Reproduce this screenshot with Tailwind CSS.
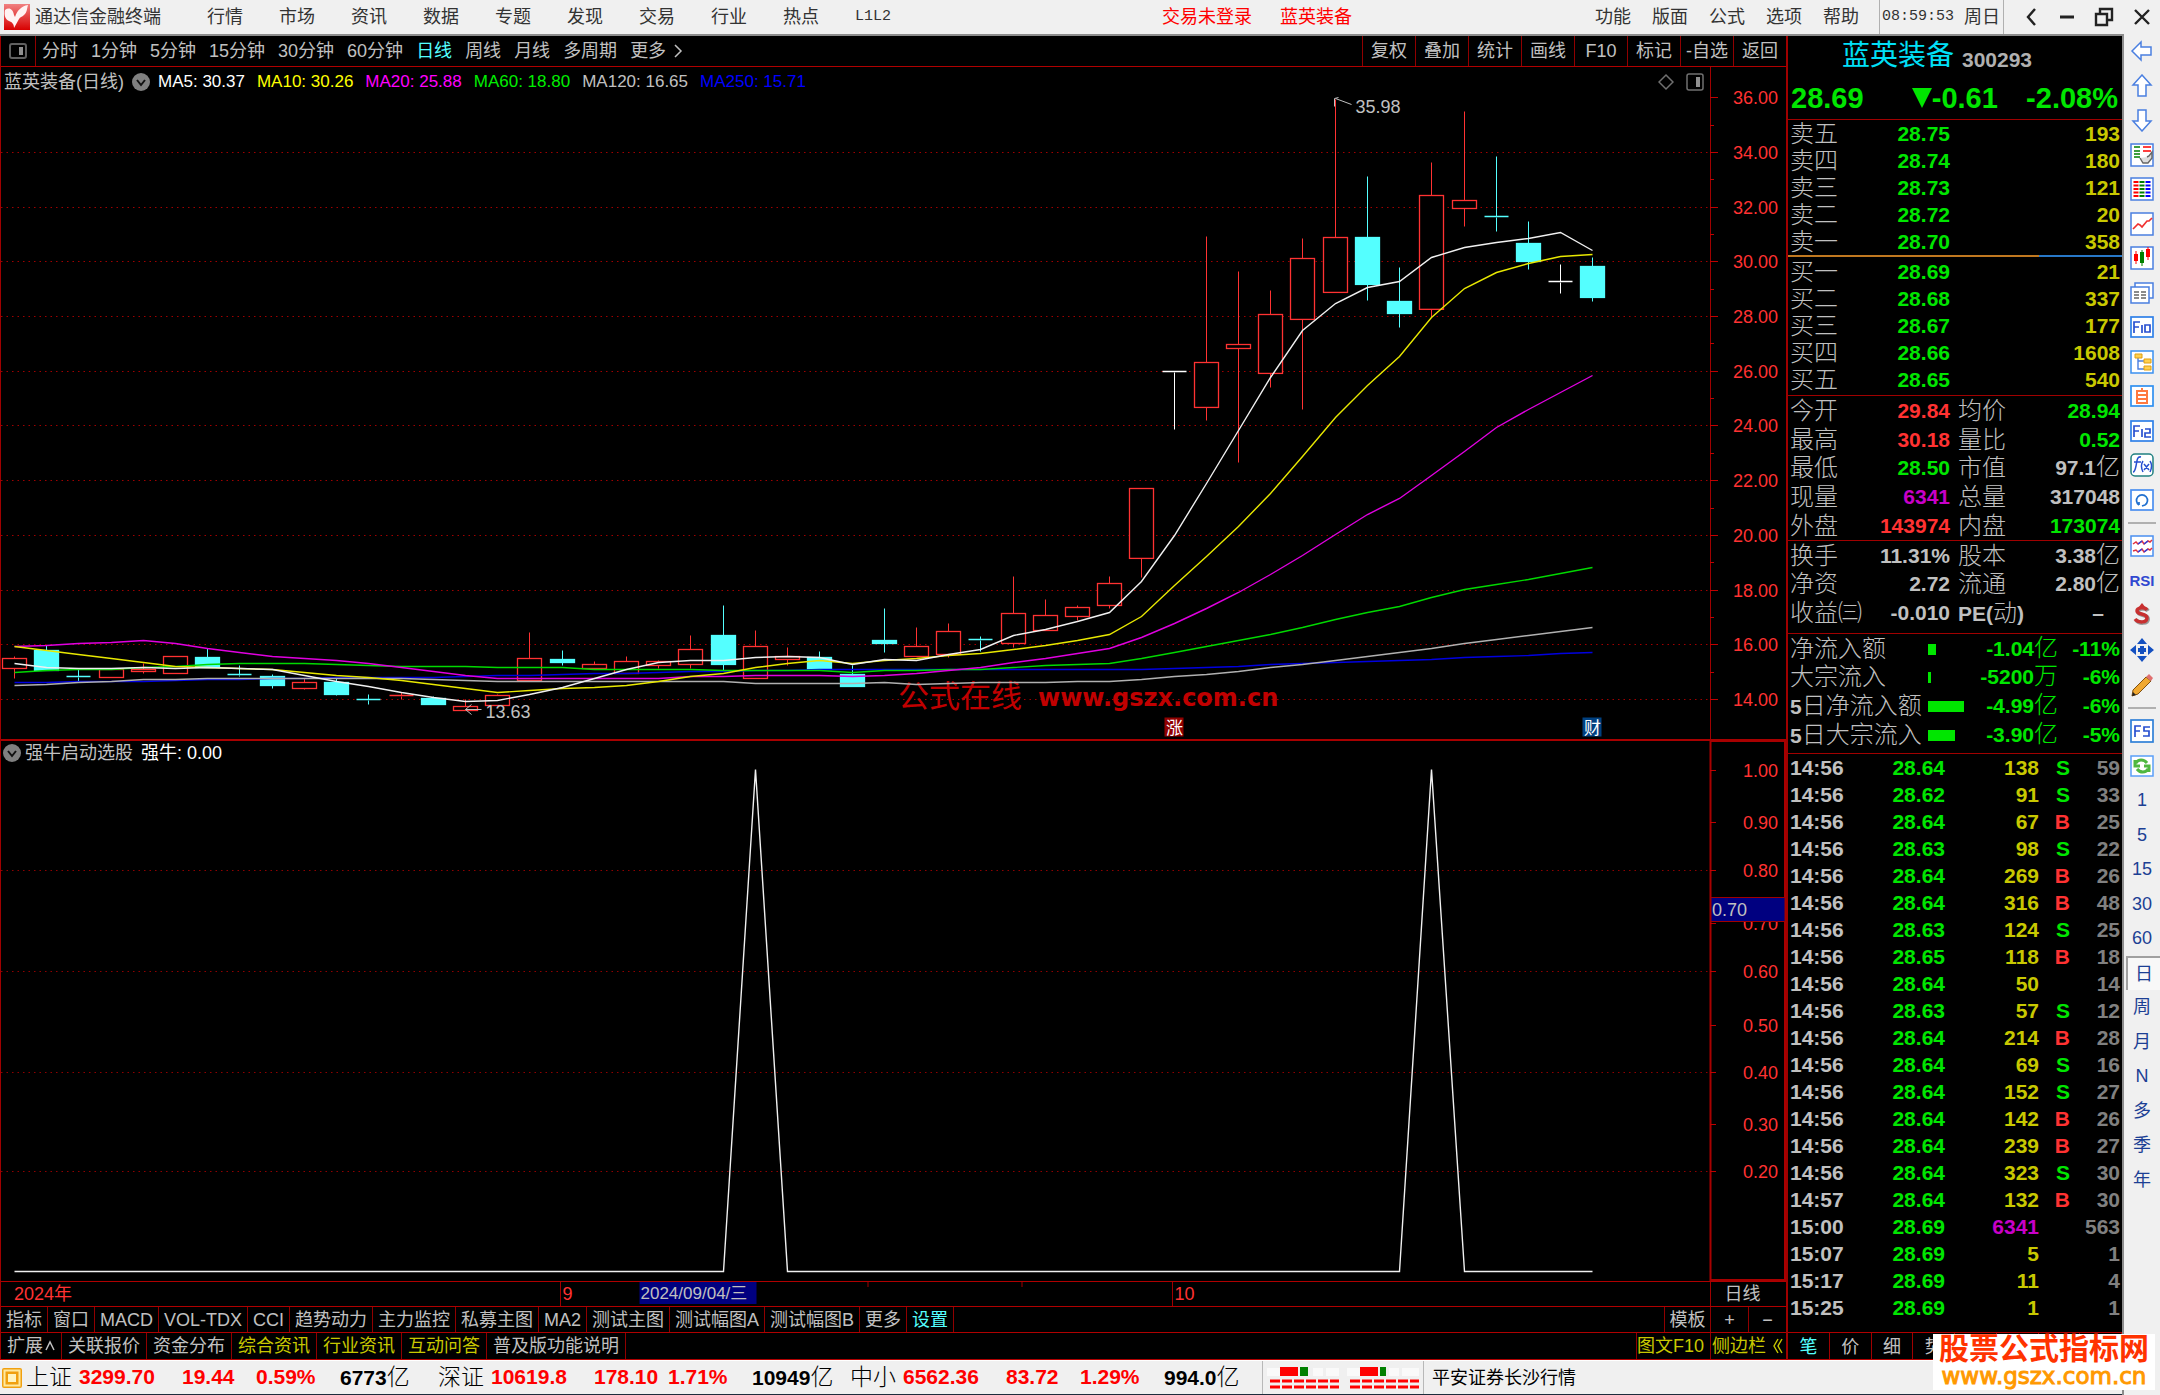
<!DOCTYPE html>
<html lang="zh-CN">
<head>
<meta charset="utf-8">
<title>通达信金融终端</title>
<script src="https://cdn.jsdelivr.net/npm/@tailwindcss/browser@4"></script>
</head>
<body class="flex h-screen flex-col overflow-hidden bg-[#f0f0f0] font-['Liberation_Sans','Noto_Sans_CJK_SC',sans-serif] text-lg leading-6 text-[#c0c0c0]">

<header class="flex h-[34px] shrink-0 items-center whitespace-nowrap text-[#333]">
  <svg class="ml-1 size-[26px] shrink-0" viewBox="0 0 26 26"><defs><linearGradient id="lg" x1="0" y1="0" x2="0" y2="1"><stop offset="0" stop-color="#f08080"/><stop offset="1" stop-color="#d80000"/></linearGradient></defs><rect width="26" height="26" fill="url(#lg)"/><path d="M1 6C5 3 9 5 10 11l1 2C13 7 17 2 24 1c-1 3-1 8-4 10-2 2-4 2-5 4l-5 9C10 20 8 18 5 17 1 15 0 11 1 6z" fill="#fff3f3"/></svg>
  <h1 class="ml-[5px] w-[172px]">通达信金融终端</h1>
  <nav class="flex gap-9">
    <a href="#">行情</a><a href="#">市场</a><a href="#">资讯</a><a href="#">数据</a><a href="#">专题</a><a href="#">发现</a><a href="#">交易</a><a href="#">行业</a><a href="#">热点</a><a href="#" class="font-['Liberation_Mono',monospace] text-[15px]">L1L2</a>
  </nav>
  <div class="ml-auto flex gap-7 pr-[243px] text-[#f00]"><a href="#">交易未登录</a><a href="#">蓝英装备</a></div>
  <nav class="flex gap-[21px] pr-5"><a href="#">功能</a><a href="#">版面</a><a href="#">公式</a><a href="#">选项</a><a href="#">帮助</a></nav>
  <div class="flex h-full w-[125px] items-center justify-between border-x border-[#b0b0b0] pl-[2px] pr-[3px]"><time class="font-['Liberation_Mono',monospace] text-[15px]">08:59:53</time><span>周日</span></div>
  <div class="flex w-[156px] items-center justify-between pl-[19px] pr-[10px] text-[#222]">
    <button aria-label="后退"><svg class="h-5 w-4" viewBox="0 0 16 20" fill="none" stroke="currentColor" stroke-width="2.4"><path d="M12 2L5 10l7 8"/></svg></button>
    <button aria-label="最小化"><svg class="h-5 w-4" viewBox="0 0 16 20"><path d="M1 10h14" stroke="currentColor" stroke-width="3"/></svg></button>
    <button aria-label="还原"><svg class="size-5" viewBox="0 0 20 20" fill="none" stroke="currentColor" stroke-width="2.4"><path d="M2 7h11v11H2zM6 7V2h12v11h-5"/></svg></button>
    <button aria-label="关闭"><svg class="h-5 w-4" viewBox="0 0 16 20" fill="none" stroke="currentColor" stroke-width="2.4"><path d="M1 3l14 14M15 3L1 17"/></svg></button>
  </div>
</header>

<div class="flex min-h-0 flex-1">
<div class="flex min-w-0 flex-1 flex-col border-r-2 border-t-2 border-[#8c8c8c]">
<div class="flex min-h-0 flex-1 bg-black">

<main class="flex min-w-0 flex-1 flex-col border-l border-[#a00000]">
  <div class="flex h-[31px] shrink-0 items-center border-b border-[#b00000] whitespace-nowrap">
    <button aria-label="侧栏" class="flex h-full w-[35px] items-center justify-center border-r border-[#900000]"><svg class="size-[18px]" viewBox="0 0 18 18" fill="none" stroke="#606060" stroke-width="2"><rect x="1" y="2" width="16" height="14" rx="2"/><path d="M12 5v8" stroke="#909090" stroke-width="4"/></svg></button>
    <nav class="flex gap-[13px] pl-[6px]">
      <button>分时</button><button>1分钟</button><button>5分钟</button><button>15分钟</button><button>30分钟</button><button>60分钟</button><button class="text-[#54ffff]">日线</button><button>周线</button><button>月线</button><button>多周期</button><button class="flex items-center gap-1">更多<svg class="size-4" viewBox="0 0 16 16" fill="none" stroke="currentColor" stroke-width="1.5"><path d="M5 2l6 6-6 6"/></svg></button>
    </nav>
    <nav class="ml-auto flex h-full [&>button]:w-[53px] [&>button]:border-l [&>button]:border-[#900000]">
      <button>复权</button><button>叠加</button><button>统计</button><button>画线</button><button>F10</button><button>标记</button><button>-自选</button><button>返回</button>
    </nav>
  </div>

  <section class="relative min-h-0 flex-[673]">
    <svg id="price" class="absolute inset-0 size-full"></svg>
    <div class="relative flex items-center gap-3 pl-[3px] pr-[82px] pt-[3px] text-[17px] whitespace-nowrap">
      <span class="-mr-1 text-lg leading-6">蓝英装备(日线)</span>
      <svg class="-mr-1 size-[18px]" viewBox="0 0 18 18"><circle cx="9" cy="9" r="9" fill="#808080"/><path d="M5 7l4 5 4-5" fill="none" stroke="#111" stroke-width="2"/></svg>
      <span class="text-white">MA5: 30.37</span><span class="text-[#ff0]">MA10: 30.26</span><span class="text-[#f0f]">MA20: 25.88</span><span class="text-[#0e0]">MA60: 18.80</span><span>MA120: 16.65</span><span class="text-[#00f]">MA250: 15.71</span>
      <svg class="ml-auto h-[18px] w-4" viewBox="0 0 16 18" fill="none" stroke="#707070" stroke-width="1.5"><path d="M8 2l7 7-7 7-7-7z"/></svg>
      <svg class="size-[18px]" viewBox="0 0 18 18" fill="none" stroke="#707070" stroke-width="1.5"><rect x="1" y="1" width="16" height="16" rx="2"/><path d="M12 4v10" stroke="#909090" stroke-width="4"/></svg>
    </div>
  </section>

  <section class="relative min-h-0 flex-[541] border-t-2 border-[#a80000]">
    <svg id="signal" class="absolute inset-0 size-full"></svg>
    <div class="relative flex items-center gap-2 pl-[2px] text-lg leading-6">
      <svg class="-mr-1 size-[18px]" viewBox="0 0 18 18"><circle cx="9" cy="9" r="9" fill="#808080"/><path d="M5 7l4 5 4-5" fill="none" stroke="#111" stroke-width="2"/></svg>
      <span>强牛启动选股</span><span class="text-white">强牛: 0.00</span>
    </div>
  </section>

  <div class="flex h-[25px] shrink-0 border-t border-[#b00000]">
    <svg id="dates" class="h-full min-w-0 flex-1"></svg>
    <div class="w-[76px] border-l border-[#a00000] pr-3 text-center">日线</div>
  </div>

  <div class="flex h-[26px] shrink-0 border-t border-[#b00000] whitespace-nowrap">
    <nav class="flex [&>button]:border-r [&>button]:border-[#900000] [&>button]:px-[5px]">
      <button>指标</button><button>窗口</button><button>MACD</button><button>VOL-TDX</button><button>CCI</button><button>趋势动力</button><button>主力监控</button><button>私募主图</button><button>MA2</button><button>测试主图</button><button>测试幅图A</button><button>测试幅图B</button><button>更多</button><button class="text-[#54ffff]">设置</button>
    </nav>
    <div class="ml-auto flex [&>button]:border-l [&>button]:border-[#900000]"><button class="w-[46px]">模板</button><button class="w-[38px]">+</button><button class="w-[38px]">−</button></div>
  </div>
  <div class="flex h-[28px] shrink-0 border-y border-[#b00000] leading-[26px] whitespace-nowrap">
    <nav class="flex [&>a]:border-r [&>a]:border-[#900000] [&>a]:px-[6px]">
      <a href="#" class="flex items-center gap-[2px]">扩展<svg class="h-4 w-[10px]" viewBox="0 0 10 16" fill="none" stroke="currentColor" stroke-width="1.5"><path d="M1 12l4-8 4 8"/></svg></a><a href="#">关联报价</a><a href="#">资金分布</a><a href="#" class="text-[#c8c800]">综合资讯</a><a href="#" class="text-[#c8c800]">行业资讯</a><a href="#" class="text-[#c8c800]">互动问答</a><a href="#">普及版功能说明</a>
    </nav>
    <div class="ml-auto flex text-[#c8c800] [&>a]:border-l [&>a]:border-[#900000]"><a href="#" class="w-[74px]">图文F10</a><a href="#" class="flex w-[76px] items-center gap-[6px] pl-px">侧边栏<svg class="h-4 w-3" viewBox="0 0 12 16" fill="none" stroke="currentColor" stroke-width="1.4"><path d="M6 1L2 8l4 7M10 1L6 8l4 7"/></svg></a></div>
  </div>
</main>

<aside class="flex w-[336px] shrink-0 flex-col border-l-2 border-[#a00000] text-[21px] font-bold [&_th]:text-left [&_th]:text-[24px] [&_th]:font-light [&_td]:text-right">
  <div class="h-[84px] shrink-0 border-b border-[#a00000] px-[3px]">
    <h2 class="flex h-10 items-center justify-center gap-2 pr-9 font-normal leading-9"><span class="text-[28px] leading-9 text-[#00e0f8]">蓝英装备</span><span class="pt-2 text-[21px] leading-7 font-bold text-[#b0b0b0]">300293</span></h2>
    <div class="flex h-11 items-center justify-between pr-px text-[29px] text-[#00e600]"><span>28.69</span><span class="flex items-center pl-5"><svg class="size-5" viewBox="0 0 20 20"><path d="M0 0h20L10 20z" fill="currentColor"/></svg>-0.61</span><span>-2.08%</span></div>
  </div>
  <table class="mx-[2px] table-fixed leading-[27px]"><colgroup><col class="w-[60px]"><col class="w-[100px]"><col></colgroup><tbody id="asks"></tbody></table>
  <div class="mb-px flex h-[2px] shrink-0"><i class="flex-[3] bg-[#c07820]"></i><i class="flex-1 bg-[#2878c8]"></i></div>
  <table class="mx-[2px] table-fixed leading-[27px]"><colgroup><col class="w-[60px]"><col class="w-[100px]"><col></colgroup><tbody id="bids"></tbody></table>
  <div class="mt-[2px] border-t border-[#a00000] px-[2px] pt-px">
    <table class="h-[143px] w-full table-fixed leading-[28px]"><colgroup><col class="w-[76px]"><col class="w-[84px]"><col class="w-[90px]"><col></colgroup><tbody id="quote"></tbody></table>
  </div>
  <div class="border-t border-[#a00000] px-[2px] pb-[5px] pt-px">
    <table class="h-[86px] w-full table-fixed leading-[28px]"><colgroup><col class="w-[76px]"><col class="w-[84px]"><col class="w-[90px]"><col></colgroup><tbody id="shares"></tbody></table>
  </div>
  <div class="border-y border-[#a00000] px-[2px] pb-[3px] pt-px">
    <table class="h-[115px] w-full table-fixed leading-[28px] text-[#00e600]"><colgroup><col class="w-[138px]"><col class="w-[36px]"><col class="w-[94px]"><col></colgroup><tbody id="flow"></tbody></table>
  </div>
  <table class="mx-[2px] table-fixed leading-[27px]"><colgroup><col class="w-[60px]"><col class="w-[95px]"><col class="w-[94px]"><col class="w-[31px]"><col></colgroup><tbody id="ticks"></tbody></table>
  <nav class="mt-auto flex h-[28px] shrink-0 border-y border-[#b00000] text-lg font-normal [&>*]:flex-1 [&>*]:border-r [&>*]:border-[#a00000]">
    <button class="text-[#54ffff]">笔</button><button>价</button><button>细</button><button>势</button><i></i><i></i><i></i><i></i>
  </nav>
</aside>
</div>

<footer class="flex h-[35px] shrink-0 items-center border-b border-t border-b-[#1c2c3c] border-t-white bg-[#f0f0f0] text-[21px] font-bold whitespace-nowrap text-black">
  <svg class="ml-[2px] mr-1 size-5 shrink-0" viewBox="0 0 20 20"><rect width="20" height="20" rx="2" fill="#f0a010"/><rect x="2.500" y="2.500" width="15" height="15" fill="none" stroke="#ffe9a0" stroke-width="2"/><rect x="6" y="6" width="8" height="8" fill="#fff4c0"/></svg>
  <div id="indices" class="flex"></div>
  <div class="flex h-full w-[162px] items-center justify-center gap-2 border-x border-[#b8b8b8]">
    <svg class="h-[22px] w-[72px]" viewBox="0 0 72 22"><path d="M0 1h15v8H0zM46 1h10v8H46zM59 1h13v8H59z" fill="#fafafa"/><path d="M13 0h18v9H13z" fill="red"/><path d="M33 0h8v9h-8z" fill="green"/><path d="M3 14h69M3 20h69" stroke="red" stroke-width="3" stroke-dasharray="10 2"/></svg>
    <svg class="h-[22px] w-[72px]" viewBox="0 0 72 22"><path d="M0 1h15v8H0zM42 1h10v8H42zM55 1h17v8H55z" fill="#fafafa"/><path d="M13 0h18v9H13z" fill="red"/><path d="M33 0h6v9h-6z" fill="green"/><path d="M3 14h69M3 20h69" stroke="red" stroke-width="3" stroke-dasharray="10 2"/></svg>
  </div>
  <span class="pl-2 text-lg font-normal">平安证券长沙行情</span>
</footer>
</div>

<nav class="flex w-9 shrink-0 flex-col text-[#1c3f94] [&_button]:flex [&_button]:items-center [&_button]:justify-center [&_svg]:size-6">
  <div class="grid h-[483px] shrink-0 auto-rows-fr">
    <button aria-label="左"><svg viewBox="0 0 24 24" fill="#fff" stroke="#4a7fe0" stroke-width="1.500"><path d="M2 12l9-9v5h10v8H11v5z"/></svg></button>
    <button aria-label="上"><svg viewBox="0 0 24 24" fill="#fff" stroke="#4a7fe0" stroke-width="1.500"><path d="M12 1l9 10h-5v11H8V11H3z"/></svg></button>
    <button aria-label="下"><svg viewBox="0 0 24 24" fill="#fff" stroke="#4a7fe0" stroke-width="1.500"><path d="M12 23l9-10h-5V2H8v11H3z"/></svg></button>
    <button aria-label="委托"><svg viewBox="0 0 24 24"><rect x="1" y="1" width="22" height="22" fill="#fff" stroke="#4a7fe0" stroke-width="1.500"/><path d="M4 4h6M4 8h6M4 11h6M4 14h6" stroke="green" stroke-width="1.600"/><path d="M13 4h8M13 8h8" stroke="red" stroke-width="1.600"/><path d="M10 15l3 5h5l4-5V9l-3 4-2 1" fill="#ddd" stroke="#666" stroke-width="1.400"/></svg></button>
    <button aria-label="列表"><svg viewBox="0 0 24 24"><rect x="1" y="1" width="22" height="22" fill="#fff" stroke="#4a7fe0" stroke-width="1.500"/><g stroke-width="5" stroke-dasharray="2 1.500"><path d="M6 4v16" stroke="red"/><path d="M12 4v16" stroke="green"/><path d="M18 4v16" stroke="blue"/></g></svg></button>
    <button aria-label="分时图"><svg viewBox="0 0 24 24" fill="none"><rect x="1" y="1" width="22" height="22" fill="#fff" stroke="#4a7fe0" stroke-width="1.500"/><path d="M3 17l5-5 2 1 2 2 5-6 2 0 3-3" stroke="#f03030" stroke-width="1.700"/></svg></button>
    <button aria-label="K线图"><svg viewBox="0 0 24 24"><rect x="1" y="1" width="22" height="22" fill="#fff" stroke="#4a7fe0" stroke-width="1.500"/><path d="M6 5v13M18 1v13" stroke="red"/><path d="M12 4v16" stroke="green"/><path d="M4 8h4v7H4zM16 3h4v8h-4z" fill="red"/><path d="M10 6h4v11h-4z" fill="green"/></svg></button>
    <button aria-label="多窗口"><svg viewBox="0 0 24 24" fill="#fff" stroke="#4a7fe0" stroke-width="1.500"><path d="M5 2h18v15H5z"/><path d="M1 6h18v16H1z"/><path d="M4 11h5M11 11h5M4 14h5M11 14h5M4 17h5M11 17h5" stroke="#666"/></svg></button>
    <button aria-label="F10"><svg viewBox="0 0 24 24" fill="none" stroke="#2850d0" stroke-width="1.700"><rect x="1" y="2" width="22" height="20" fill="#fff" stroke="#2f80e8"/><path d="M4 18V7h6M4 12h5M12 10v8M15 10h5v7h-5z"/></svg></button>
    <button aria-label="树形"><svg viewBox="0 0 24 24" fill="none"><rect x="1" y="1" width="22" height="22" fill="#fff" stroke="#3a90f0" stroke-width="1.500"/><path d="M8 7v12h6M8 11h6" stroke="#4a7fe0" stroke-width="1.400"/><path d="M5 4h7v4H5zM14 9h7v4h-7zM14 16h7v4h-7z" fill="#ffd050" stroke="#e0a010"/></svg></button>
    <button aria-label="自选"><svg viewBox="0 0 24 24" fill="none" stroke="#ff7a40" stroke-width="2"><rect x="1" y="2" width="22" height="20" fill="#fff" stroke="#2f90f0" stroke-width="1.700"/><path d="M7 7h10v12H7zM7 11h10M7 15h10M12 7V4"/></svg></button>
    <button aria-label="F12"><svg viewBox="0 0 24 24" fill="none" stroke="#2850d0" stroke-width="1.700"><rect x="1" y="2" width="22" height="20" fill="#fff" stroke="#2f80e8"/><path d="M4 18V7h6M4 12h5M12 10v8M15 10h5v4h-5v4h6"/></svg></button>
    <button aria-label="公式"><svg viewBox="0 0 24 24" fill="none" stroke="#2850d0" stroke-width="1.500"><rect x="1" y="1" width="22" height="22" rx="4" fill="#fff" stroke="#208080"/><path d="M11 4c-4-1-4 4-5 9s-2 6-3 6M4 9h7M13 8c-2 3-2 7 0 11M20 8c2 3 2 7 0 11M14 11l5 6M19 11l-5 6"/></svg></button>
    <button aria-label="循环"><svg viewBox="0 0 24 24" fill="none" stroke="#2070d0" stroke-width="1.700"><rect x="1" y="2" width="22" height="20" fill="#fff" stroke="#4a8ff0"/><path d="M9 17a5.500 5.500 0 1 1 6 0M9 17v-3M15 17l-3 1"/></svg></button>
  </div>
  <hr class="mx-1 my-[5px] border-t-2 border-[#b0b0b0]">
  <div class="grid h-[173px] shrink-0 auto-rows-fr">
    <button aria-label="指标线"><svg viewBox="0 0 24 24" fill="none" stroke-width="1.500"><rect x="1" y="2" width="22" height="20" fill="#fff" stroke="#4a8ff0"/><path d="M3 10l3-2 2 2 4-3 2 3 4-3 2 1 2-2M3 17l3-1 2 2 4-3 2 3 4-3 2 1 2-2" stroke="#e03040"/><path d="M8 10l4-3M14 10l4-3M8 18l4-3M14 18l4-3" stroke="#3040e0"/></svg></button>
    <button class="text-[15px] font-bold text-[#3048d0]">RSI</button>
    <button aria-label="资金"><svg viewBox="0 0 24 24" fill="none"><path d="M18 8c-2-3-10-3-10 1s10 2 10 7-9 5-12 1" stroke="#999" stroke-width="4"/><path d="M17 7c-2-3-10-3-10 1s10 2 10 7-9 5-12 1" stroke="#c83030" stroke-width="3.500"/><path d="M12 0l4 5H8z" fill="#c83030"/></svg></button>
    <button aria-label="移动"><svg viewBox="0 0 24 24" fill="#1450c0"><path d="M12 0l5 6H7zM12 24l5-6H7zM0 12l6-5v10zM24 12l-6-5v10zM10 8h4v8h-4zM8 10h8v4H8z"/></svg></button>
    <button aria-label="画笔"><svg viewBox="0 0 24 24"><path d="M3 17L16 4l5 4L8 21l-6 2z" fill="#f0a830" stroke="#805010"/><path d="M16 4l3-3 4 4-2 3z" fill="#e07070"/><path d="M2 23l1-4 3 3z" fill="#222"/></svg></button>
  </div>
  <hr class="mx-1 my-[5px] border-t-2 border-[#b0b0b0]">
  <div class="grid h-[483px] shrink-0 auto-rows-fr">
    <button aria-label="F5"><svg viewBox="0 0 24 24" fill="none" stroke="#2850d0" stroke-width="1.700"><rect x="1" y="1" width="22" height="22" fill="#fff" stroke="#2f80d8"/><path d="M5 18V7h6M5 12h5M20 8h-6v4h5v5h-6"/></svg></button>
    <button aria-label="刷新"><svg viewBox="0 0 24 24" fill="none" stroke="#50b840" stroke-width="3"><rect x="1" y="2" width="22" height="20" fill="#fff" stroke="#5a9ff8" stroke-width="1.500"/><path d="M6 9c2-4 8-4 11 0M18 15c-2 4-8 4-11 0M5 6v6h5M19 18v-6h-5"/></svg></button>
    <button>1</button><button>5</button><button>15</button><button>30</button><button>60</button>
    <button class="ml-[2px] border-l-2 border-t-2 border-[#a0a0a0] bg-[#f8f8f8]">日</button>
    <button>周</button><button>月</button><button>N</button><button>多</button><button>季</button><button>年</button>
  </div>
</nav>
</div>

<div class="absolute bottom-[5px] right-[5px] w-[222px] bg-white pb-[2px] text-center whitespace-nowrap">
  <p class="text-[30px] font-bold leading-[30px] text-[#ff3300]">股票公式指标网</p>
  <p class="font-['DejaVu_Sans',sans-serif] text-[23px] leading-[24px] text-[#ff9900] [-webkit-text-stroke:1px_#ff9900]">www.gszx.com.cn</p>
</div>

<script>
const G = '#00e600', R = '#ff3232', Y = '#c8c800', M = '#c800c8', W = '#c0c0c0', D = '#808080', C = '#54ffff';
const row = (...cells) => '<tr>' + cells.join('') + '</tr>';
const td = (t, c) => `<td style="color:${c}">${t}</td>`;
const th = t => `<th scope="row">${t}</th>`;
const fill = (id, rows) => document.getElementById(id).innerHTML = rows.join('');
const cn = t => `<span class="text-[24px] font-light leading-none">${t}</span>`;

fill('asks', [['卖五','28.75',193],['卖四','28.74',180],['卖三','28.73',121],['卖二','28.72',20],['卖一','28.70',358]].map(r => row(th(r[0]), td(r[1], G), td(r[2], Y))));
fill('bids', [['买一','28.69',21],['买二','28.68',337],['买三','28.67',177],['买四','28.66',1608],['买五','28.65',540]].map(r => row(th(r[0]), td(r[1], G), td(r[2], Y))));
const th2 = t => `<th scope="row" class="pl-2">${t}</th>`;
fill('quote', [['今开','29.84',R,'均价','28.94',G],['最高','30.18',R,'量比','0.52',G],['最低','28.50',G,'市值','97.1' + cn('亿'),W],['现量','6341',M,'总量','317048',W],['外盘','143974',R,'内盘','173074',G]].map(r => row(th(r[0]), td(r[1], r[2]), th2(r[3]), td(r[4], r[5]))));
fill('shares', [['换手','11.31%','股本','3.38' + cn('亿')],['净资','2.72','流通','2.80' + cn('亿')],['收益㈢','-0.010','<span class="text-[21px] font-bold">PE(</span>动<span class="text-[21px] font-bold">)</span>','<span class="pr-4">–</span>']].map(r => row(th(r[0]), td(r[1], W), th2(r[2]), td(r[3], W))));
const five = '<span class="text-[21px] font-bold">5</span>';
fill('flow', [['净流入额',8,'-1.04','亿','-11%'],['大宗流入',3,'-5200','万','-6%'],[five + '日净流入额',36,'-4.99','亿','-6%'],[five + '日大宗流入',27,'-3.90','亿','-5%']].map(r =>
  row(`<th scope="row" class="whitespace-nowrap text-[#c0c0c0]">${r[0]}</th>`, `<td><div class="h-[11px] bg-[#00e600]" style="width:${r[1]}px"></div></td>`, td(r[2] + cn(r[3]), G), td(r[4], G))));
fill('ticks', `14:56 28.64 138 S 59
14:56 28.62 91 S 33
14:56 28.64 67 B 25
14:56 28.63 98 S 22
14:56 28.64 269 B 26
14:56 28.64 316 B 48
14:56 28.63 124 S 25
14:56 28.65 118 B 18
14:56 28.64 50 - 14
14:56 28.63 57 S 12
14:56 28.64 214 B 28
14:56 28.64 69 S 16
14:56 28.64 152 S 27
14:56 28.64 142 B 26
14:56 28.64 239 B 27
14:56 28.64 323 S 30
14:57 28.64 132 B 30
15:00 28.69 6341 - 563
15:07 28.69 5 - 1
15:17 28.69 11 - 4
15:25 28.69 1 - 1`.split('\n').map(l => { const [t, p, v, s, n] = l.split(' ');
  return row(`<td><div class="text-left">${t}</div></td>`, td(p, G), td(v, v === '6341' ? M : Y), td(s === '-' ? '' : s, s === 'S' ? G : R), td(n, D)); }));
document.getElementById('indices').innerHTML = [['上证','3299.70','19.44','0.59%','6773'],['深证','10619.8','178.10','1.71%','10949'],['中小','6562.36','83.72','1.29%','994.0']].map(r =>
  `<div class="grid w-[412px] grid-cols-[53px_103px_74px_84px_98px] text-[#f00]"><span class="text-[23px] font-light text-black">${r[0]}</span><span>${r[1]}</span><span>${r[2]}</span><span>${r[3]}</span><span class="text-black">${r[4]}<span class="text-[23px] font-light">亿</span></span></div>`).join('');

// Candles: kind, high, body top, body bottom, low
const candles = `r 590 592 602 612|c 579 584 604 604|c 602 610 611 615|r 603 603 611 611|r 597 603 605 607|r 590 590 607 607|c 582 591 601 601|c 599 608 609 610|c 608 610 619 622|r 612 616 622 623|c 612 616 628 629|c 628 633 634 638|r 626 629 630 633|c 630 632 638 638|r 633 640 644 644|r 628 629 639 639|r 566 592 614 614|c 584 593 596 599|r 595 598 602 602|r 590 595 607 607|r 594 595 599 602|r 569 583 598 602|c 539 569 598 604|r 564 580 612 612|r 581 590 593 599|c 585 591 603 603|c 599 608 620 620|c 542 574 577 586|r 561 580 590 590|r 557 565 588 591|c 570 573 574 585|r 510 547 577 581|r 533 549 564 564|r 539 541 550 554|r 510 517 539 542|r 422 422 492 511|w 304 304 305 363|r 169 295 340 354|r 204 277 281 396|r 223 247 306 320|r 171 191 252 343|r 32 170 225 225|c 109 170 217 233|c 200 234 246 260|r 95 128 242 250|r 44 133 141 159|c 89 149 150 164|c 154 176 194 202|w 197 214 215 226|c 190 199 230 234`.split('|').map(s => s.split(' '));
const averages = [
  ['#0000e0', '616 616 615 615 615 614 613 613 612 612 611 611 611 611 610 609 609 608 607 607 606 605 605 604 604 603 603 603 603 603 603 603 603 603 603 603 602 601 600 598 597 596 595 594 593 591 590 589 587 586'],
  ['#b0b0b0', '619 618 616 615 613 613 612 612 612 612 612 612 612 613 614 615 615 615 615 615 615 615 615 617 617 617 617 616 618 617 616 616 616 615 615 613 610 608 605 601 598 594 590 586 582 577 573 569 565 561'],
  ['#00d800', '606 604 603 603 601 600 598 597 597 597 598 599 600 600 600 601 601 601 603 603 603 603 604 604 604 604 606 604 604 603 603 601 599 598 597 592 586 580 574 568 561 553 546 540 531 523 518 513 507 501'],
  ['#e000e0', '580 579 577 576 574 577 582 586 590 592 594 597 601 605 609 612 612 612 612 612 612 610 610 609 609 609 610 609 607 604 601 596 592 587 582 571 557 542 526 508 489 468 448 432 409 385 361 343 325 308'],
  ['#e8e800', '580 584 588 592 596 600 601 602 603 606 609 611 614 618 622 626 624 622 621 619 615 610 607 601 597 594 597 594 592 589 587 583 579 574 568 550 519 490 460 427 390 351 318 289 250 221 205 196 189 187'],
  ['#f0f0f0', '597 601 602 602 601 602 601 602 603 609 615 620 626 631 635 634 628 621 612 603 596 594 594 591 590 591 598 593 594 588 583 569 563 555 546 515 469 417 364 310 263 236 220 214 190 180 175 171 165 183']];
const line = (x1, y1, x2, y2, c, extra = '') => `<line x1="${x1}" y1="${y1}" x2="${x2}" y2="${y2}" stroke="${c}" ${extra}/>`;
const text = (x, y, t, c, extra = '') => `<text x="${x}" y="${y}" fill="${c}" font-size="18" ${extra}>${t}</text>`;
const h = Math.round;
function draw() {
  const svg = document.getElementById('price'), w = svg.clientWidth, k = svg.clientHeight / 673, ax = w - 76;
  const X = i => h((14 + 32.25 * i) * ax / 1711) - .5, V = v => h(v * k) + .5;
  let s = line(ax + .5, 0, ax + .5, 673 * k, '#a00000');
  for (let p = 36; p >= 14; p--) {
    const y = V(85 + (34 - p) * 27.4);
    s += line(ax, y, ax + (p % 2 ? 4 : 8), y, '#c00000');
    if (p % 2) continue;
    if (p < 36) s += line(0, y, ax, y, '#a00000', 'stroke-dasharray="1.500 4"');
    s += text(w - 8, y + 6, p + '.00', R, 'text-anchor="end"');
  }
  s += text(h(ax * .525), V(640), '公式在线', '#c00000', 'style="font-size:31px"');
  s += text(h(ax * .607), V(639), 'www.gszx.com.cn', '#c00000', 'style="font:bold 24px \'DejaVu Sans\',sans-serif"');
  candles.forEach(([kind, hi, t, b, lo], i) => {
    const x = X(i), col = kind === 'r' ? R : kind === 'c' ? C : '#fff', thin = b - t < 2;
    s += line(x, V(hi), x, V(t), col) + line(x, V(b), x, V(lo), col);
    s += thin ? line(x - 12, V(t), x + 12, V(t), col, 'stroke-width="1.500"')
      : `<rect x="${x - 12}" y="${V(t)}" width="24" height="${(b - t) * k}" fill="${kind === 'c' ? C : '#000'}" stroke="${col}" stroke-width="1.300"/>`;
  });
  averages.forEach(([c, v]) => s += `<polyline fill="none" stroke="${c}" stroke-width="1.400" points="${v.split(' ').map((y, i) => X(i) + ',' + V(y)).join(' ')}"/>`);
  s += `<path d="M${X(41) + 16} ${V(37)}l-16-6m-1 8v-8l4-1" fill="none" stroke="#c0c0c0"/>` + text(X(41) + 20, V(45), '35.98', W);
  s += `<path d="M${X(14) + 16} ${V(643)}h-16m6 -5l-6 5 6 5" fill="none" stroke="#c0c0c0"/>` + text(X(14) + 20, V(651), '13.63', W);
  [[36, '涨', '#900000'], [49, '财', '#004080']].forEach(([i, t, c]) => s += `<rect x="${X(i) - 10}" y="${V(651)}" width="19" height="19" fill="${c}"/>` + text(X(i), V(667), t, '#fff', 'text-anchor="middle" style="font-size:17px"'));
  svg.innerHTML = s;

  const sub = document.getElementById('signal'), q = sub.clientHeight / 539, S = v => h(v * q) + .5;
  s = `<rect x="${ax + .5}" y="0" width="${Math.max(0, w - ax - 1.5)}" height="${Math.max(0, sub.clientHeight - 1)}" fill="none" stroke="#a80000" stroke-width="2"/>`;
  [[1, 29], [.9, 81], [.8, 129], [.7, 182], [.6, 230], [.5, 283], [.4, 330], [.3, 382], [.2, 429]].forEach(([v, y], i) => {
    if (i && i % 2 === 0) s += line(0, S(y), ax, S(y), '#900000', 'stroke-dasharray="1.500 4"');
    s += line(ax, S(y), ax + 6, S(y), '#c00000') + text(w - 8, S(y) + 6, v.toFixed(2), R, 'text-anchor="end"');
  });
  s += `<rect x="${ax + 1}" y="${S(156)}" width="${w - ax - 2}" height="24" fill="#000080" stroke="#a00000"/>` + text(ax + 2, S(174), '0.70', W);
  s += `<polyline fill="none" stroke="#f0f0f0" stroke-width="1.400" points="${[[0, 529], [22, 529], [23, 28], [24, 529], [43, 529], [44, 28], [45, 529], [49, 529]].map(([i, y]) => X(i) + ',' + S(y)).join(' ')}"/>`;
  sub.innerHTML = s;

  const day = (i, t) => line(X(i) - 2, 0, X(i) - 2, 24, '#a00000') + text(X(i), 18, t, R);
  document.getElementById('dates').innerHTML = text(13, 18, '2024年', R) + day(17, '9') + day(36, '10')
    + line(867, 0, 867, 5, '#a00000') + line(1021, 0, 1021, 5, '#a00000')
    + `<rect x="${X(23) - 116}" y="0" width="117" height="22" fill="#000080"/>` + text(X(23) - 115, 17, '2024/09/04/三', W, 'style="font-size:17px"');
}
const watcher = new ResizeObserver(draw);
watcher.observe(document.getElementById('price'));
watcher.observe(document.getElementById('signal'));
</script>
</body>
</html>
